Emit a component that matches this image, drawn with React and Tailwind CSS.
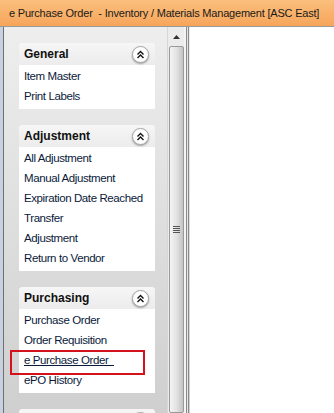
import React from "react";

function Chevrons() {
  return (
    <div className="w-[17px] h-[17px] rounded-full bg-white border border-[#a8a8a8] shadow-[0_1px_2px_rgba(0,0,0,0.35)] flex items-center justify-center">
      <svg width="9" height="9" viewBox="0 0 9 9">
        <path d="M1.5 4.5 L4.5 1.5 L7.5 4.5 M1.5 8 L4.5 5 L7.5 8" fill="none" stroke="#111" strokeWidth="1.4" />
      </svg>
    </div>
  );
}

function Card({ title, items, highlight }) {
  return (
    <div className="w-[136px] shrink-0 rounded-t-[4px] bg-white">
      <div className="h-[22px] rounded-t-[4px] flex items-center justify-between pl-[5px] pr-[6px] bg-gradient-to-b from-[#f6f6f6] to-[#ececec]">
        <span className="font-bold text-[12px] text-[#111]">{title}</span>
        <Chevrons />
      </div>
      <div className="flex flex-col pt-[2px] pb-[2px]">
        {items.map((it) => (
          <div key={it} className="h-[20px] flex items-center pl-[5px] text-[11.5px] tracking-[-0.4px] text-[#0a1a3a] relative whitespace-nowrap">
            {highlight === it ? (
              <>
                <span className="underline whitespace-pre">{it + "  "}</span>
                <div className="absolute left-[-9px] top-[-1px] w-[135px] h-[25px] border-2 border-[#d4121c]" />
              </>
            ) : (
              it
            )}
          </div>
        ))}
      </div>
    </div>
  );
}

export default function App() {
  return (
    <div className="w-[334px] h-[413px] overflow-hidden bg-white flex flex-col" style={{ fontFamily: '"Liberation Sans", Arial, sans-serif' }}>
      <div className="h-[27px] shrink-0 flex items-center pl-[9px] bg-gradient-to-b from-[#fbbf7d] to-[#f6a55a] border-b border-[#9a9a9a] text-[11px] tracking-[-0.2px] text-[#1a1a1a] whitespace-pre">
        {"e Purchase Order  - Inventory / Materials Management [ASC East]"}
      </div>
      <div className="flex-1 flex min-h-0">
        <div className="w-[3px] bg-[#c7d2de]" />
        <div className="w-[1px] bg-[#6f6f6f]" />
        <div className="w-[186px] flex min-h-0 bg-gradient-to-b from-[#eeeeee] to-[#cfcfcf]">
          <div className="w-[163px] flex flex-col gap-[16px] pt-[16px] pl-[15px] overflow-hidden">
            <Card title="General" items={["Item Master", "Print Labels"]} />
            <Card title="Adjustment" items={["All Adjustment", "Manual Adjustment", "Expiration Date Reached", "Transfer", "Adjustment", "Return to Vendor"]} />
            <Card title="Purchasing" items={["Purchase Order", "Order Requisition", "e Purchase Order", "ePO History"]} highlight="e Purchase Order" />
            <Card title="" items={[]} />
          </div>
          <div className="w-[17px] flex flex-col items-center bg-[#ececec] border-l border-[#d6d6d6]">
            <div className="h-[19px] flex items-center justify-center">
              <svg width="7" height="4" viewBox="0 0 7 4"><path d="M0 4 L3.5 0 L7 4 Z" fill="#333" /></svg>
            </div>
            <div className="flex-1 w-[15px] rounded-[2px] border border-[#9a9a9a] bg-gradient-to-r from-[#f4f4f4] via-[#e2e2e2] to-[#c4c4c4] flex items-center justify-center">
              <div className="flex flex-col gap-[1px]">
                <div className="w-[7px] h-[1px] bg-[#555]" />
                <div className="w-[7px] h-[1px] bg-[#555]" />
                <div className="w-[7px] h-[1px] bg-[#555]" />
                <div className="w-[7px] h-[1px] bg-[#555]" />
              </div>
            </div>
          </div>
          <div className="w-[2px] bg-[#f4f4f4]" />
          <div className="w-[1px] bg-[#8a8a8a]" />
          <div className="w-[1px] bg-[#e6e6e6]" />
          <div className="w-[1px] bg-[#8a8a8a]" />
        </div>
        <div className="flex-1 bg-white" />
      </div>
    </div>
  );
}
